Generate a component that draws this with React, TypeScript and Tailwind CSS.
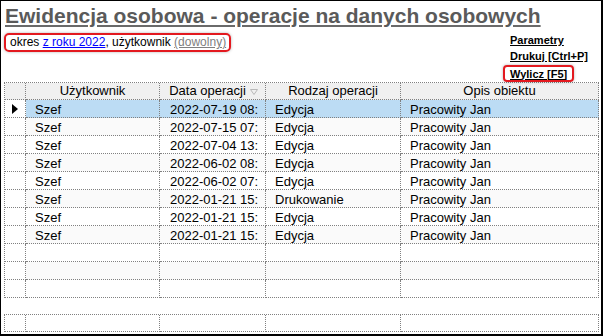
const rows = [
  ['Szef', '2022-07-19 08:', 'Edycja', 'Pracowity Jan'],
  ['Szef', '2022-07-15 07:', 'Edycja', 'Pracowity Jan'],
  ['Szef', '2022-07-04 13:', 'Edycja', 'Pracowity Jan'],
  ['Szef', '2022-06-02 08:', 'Edycja', 'Pracowity Jan'],
  ['Szef', '2022-06-02 07:', 'Edycja', 'Pracowity Jan'],
  ['Szef', '2022-01-21 15:', 'Drukowanie', 'Pracowity Jan'],
  ['Szef', '2022-01-21 15:', 'Edycja', 'Pracowity Jan'],
  ['Szef', '2022-01-21 15:', 'Edycja', 'Pracowity Jan'],
  ['', '', '', ''],
  ['', '', '', ''],
  ['', '', '', ''],
];

const widths = ['w-[134px]', 'w-[106px]', 'w-[135px]', 'w-[198px]'];
const dot = 'border-r border-b border-dotted border-[#808080]';

const SortMark = () => (
  <svg width="8" height="6" viewBox="0 0 8 6" className="ml-[4px] mt-[1px]">
    <path d="M0.5 0.5 H7.5 L4 5.5 Z" fill="none" stroke="#b8b8b8" strokeWidth="1" />
  </svg>
);

const Arrow = () => (
  <svg width="6" height="10" viewBox="0 0 6 10">
    <path d="M0 0 L6 5 L0 10 Z" fill="#000" />
  </svg>
);

const App = () => {
  return (
    <div
      className="w-[603px] h-[336px] overflow-hidden bg-white border-t border-l border-r-2 border-b-2 border-black text-black"
      style={{ fontFamily: '"Liberation Sans", Arial, sans-serif' }}
    >
      {/* Title */}
      <div className="pt-[3px] pl-[4px] h-[27px]">
        <span className="text-[21px] leading-[24px] font-bold text-[#5a5a5a] underline decoration-[#6a6a6a] underline-offset-[2px] whitespace-nowrap">
          Ewidencja osobowa - operacje na danych osobowych
        </span>
      </div>

      {/* Subheader: filters + actions */}
      <div className="flex items-start">
        <div className="flex-1 pl-[3px] pt-[1px]">
          <div className="inline-flex items-center h-[19px] pl-[4px] pr-[3px] border-2 border-[#e3191f] rounded-[5px] shadow-[0_0_3px_rgba(0,0,0,0.3)] text-[12px] leading-[12px] whitespace-nowrap">
            okres&nbsp;<span className="text-[#0000ff] underline">z roku 2022</span>, użytkownik&nbsp;
            <span className="text-[#808080] underline">(dowolny)</span>
          </div>
        </div>
        <div className="w-[98px] pt-[4px] text-[11px] font-bold text-black">
          <div className="pl-[7px] leading-[16px] underline whitespace-nowrap">Parametry</div>
          <div className="pl-[7px] leading-[16px] underline whitespace-nowrap">Drukuj [Ctrl+P]</div>
          <div className="mt-[1px] inline-flex items-center h-[17px] px-[5px] border-2 border-[#e3191f] rounded-[4px] shadow-[0_0_3px_rgba(0,0,0,0.3)] leading-[12px] underline whitespace-nowrap">
            Wylicz [F5]
          </div>
        </div>
      </div>

      {/* Grid */}
      <div className="ml-[3px] w-[595px] border-l border-t border-dotted border-[#808080] text-[13px]">
        <div className="flex h-[17px] leading-[16px] bg-[#f0f0f0]">
          <div className={`w-[21px] shrink-0 ${dot}`} />
          <div className={`${widths[0]} shrink-0 text-center ${dot}`}>Użytkownik</div>
          <div className={`${widths[1]} shrink-0 flex items-center justify-center pl-[2px] ${dot}`}>
            <span>Data operacji</span>
            <SortMark />
          </div>
          <div className={`${widths[2]} shrink-0 text-center ${dot}`}>Rodzaj operacji</div>
          <div className={`${widths[3]} shrink-0 text-center ${dot}`}>Opis obiektu</div>
        </div>
        {rows.map((r, i) => {
          const bg = i === 0 ? 'bg-[#bcdcf4]' : i % 2 === 1 ? 'bg-[#fafafa]' : 'bg-white';
          return (
            <div key={i} className="flex h-[18px] leading-[17px]">
              <div className={`w-[21px] shrink-0 flex items-center pl-[7px] bg-white ${dot}`}>
                {i === 0 && <Arrow />}
              </div>
              {r.map((c, j) => (
                <div
                  key={j}
                  className={`${widths[j]} shrink-0 overflow-hidden whitespace-nowrap pt-[1px] ${j === 1 ? 'pl-[10px]' : 'pl-[9px]'} ${bg} ${dot}`}
                >
                  {c}
                </div>
              ))}
            </div>
          );
        })}
      </div>

      {/* Footer row */}
      <div className="ml-[3px] mt-[16px] w-[595px] flex h-[18px] border-l border-t border-dotted border-[#808080]">
        <div className={`w-[21px] shrink-0 ${dot}`} />
        {widths.map((w, j) => (
          <div key={j} className={`${w} shrink-0 ${dot}`} />
        ))}
      </div>
    </div>
  );
};

export default App;
